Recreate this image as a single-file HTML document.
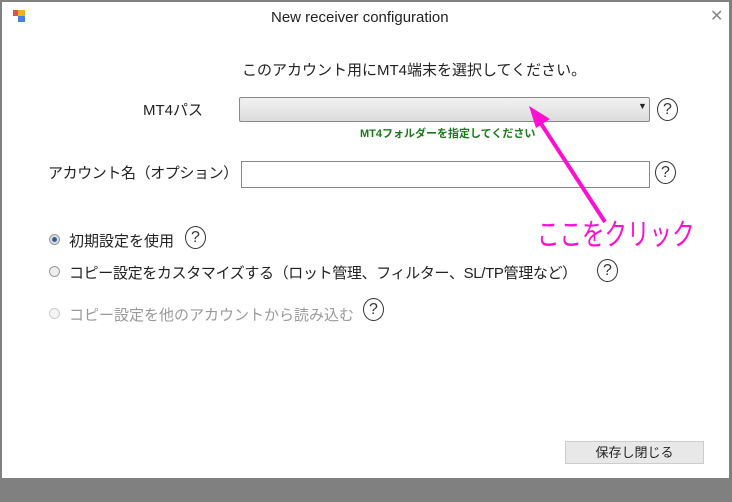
<!DOCTYPE html>
<html><head><meta charset="utf-8"><style>
*{margin:0;padding:0;box-sizing:border-box}
body{width:732px;height:502px;background:#808080;position:relative;overflow:hidden;font-family:"Liberation Sans","Noto Sans CJK JP",sans-serif;color:#222}
#win{position:absolute;left:2px;top:2px;width:727px;height:476px;background:#fff}
.a{position:absolute;white-space:nowrap}
.q{position:absolute;width:21px;height:23px;border:1px solid #333;border-radius:50%;font-size:16px;line-height:21px;text-align:center;color:#333}
.r{position:absolute;width:11px;height:11px;border-radius:50%;border:1px solid #999;background:#eee}
</style></head><body>
<div id="win">
<div class="a" style="left:11px;top:8px;width:6px;height:6px;background:#e05050"></div>
<div class="a" style="left:16px;top:8px;width:7px;height:6px;background:#f0b020"></div>
<div class="a" style="left:16px;top:14px;width:7px;height:6px;background:#4a80e0"></div>
<div class="a" style="left:269px;top:7px;font-size:15px;color:#222">New receiver configuration</div>
<div class="a" style="left:708px;top:4px;font-size:16px;color:#888">✕</div>
<div class="a" style="left:240px;top:57px;font-size:15px">このアカウント用にMT4端末を選択してください。</div>
<div class="a" style="left:141px;top:97px;font-size:15px">MT4パス</div>
<div class="a" style="left:237px;top:95px;width:411px;height:25px;border:1px solid #888;border-radius:2px;background:linear-gradient(#f2f2f2,#dcdcdc)"></div>
<div class="a" style="left:636px;top:99px;font-size:9px">▼</div>
<div class="q" style="left:655px;top:96px">?</div>
<div class="a" style="left:358px;top:123px;font-size:11px;font-weight:bold;color:#1a7a1a">MT4フォルダーを指定してください</div>
<div class="a" style="left:46px;top:160px;font-size:15px;letter-spacing:-0.4px">アカウント名（オプション）</div>
<div class="a" style="left:239px;top:159px;width:409px;height:27px;border:1px solid #888"></div>
<div class="q" style="left:653px;top:159px">?</div>
<div class="r" style="left:47px;top:232px;background:radial-gradient(#2a5a9a 30%,#ddd 45%)"></div>
<div class="a" style="left:67px;top:228px;font-size:15px">初期設定を使用</div>
<div class="q" style="left:183px;top:224px">?</div>
<div class="r" style="left:47px;top:264px"></div>
<div class="a" style="left:67px;top:260px;font-size:15px;letter-spacing:-0.35px">コピー設定をカスタマイズする（ロット管理、フィルター、SL/TP管理など）</div>
<div class="q" style="left:595px;top:257px">?</div>
<div class="r" style="left:47px;top:306px;border-color:#ccc;background:#f4f4f4"></div>
<div class="a" style="left:67px;top:302px;font-size:15px;color:#999">コピー設定を他のアカウントから読み込む</div>
<div class="q" style="left:361px;top:296px">?</div>
<div class="a" style="left:563px;top:439px;width:139px;height:23px;border:1px solid #ccc;background:#e8e8e8;font-size:13px;text-align:center;line-height:21px">保存し閉じる</div>
<div class="a" style="left:535px;top:208px;font-size:30px;color:#ff10d0;transform:scaleX(0.75);transform-origin:0 0">ここをクリック</div>
<svg class="a" style="left:0;top:0" width="727" height="476"><line x1="603" y1="220" x2="536" y2="117" stroke="#ff10d0" stroke-width="4"/><polygon points="527,104 548,117 534,126" fill="#ff10d0"/></svg>
</div>
</body></html>
